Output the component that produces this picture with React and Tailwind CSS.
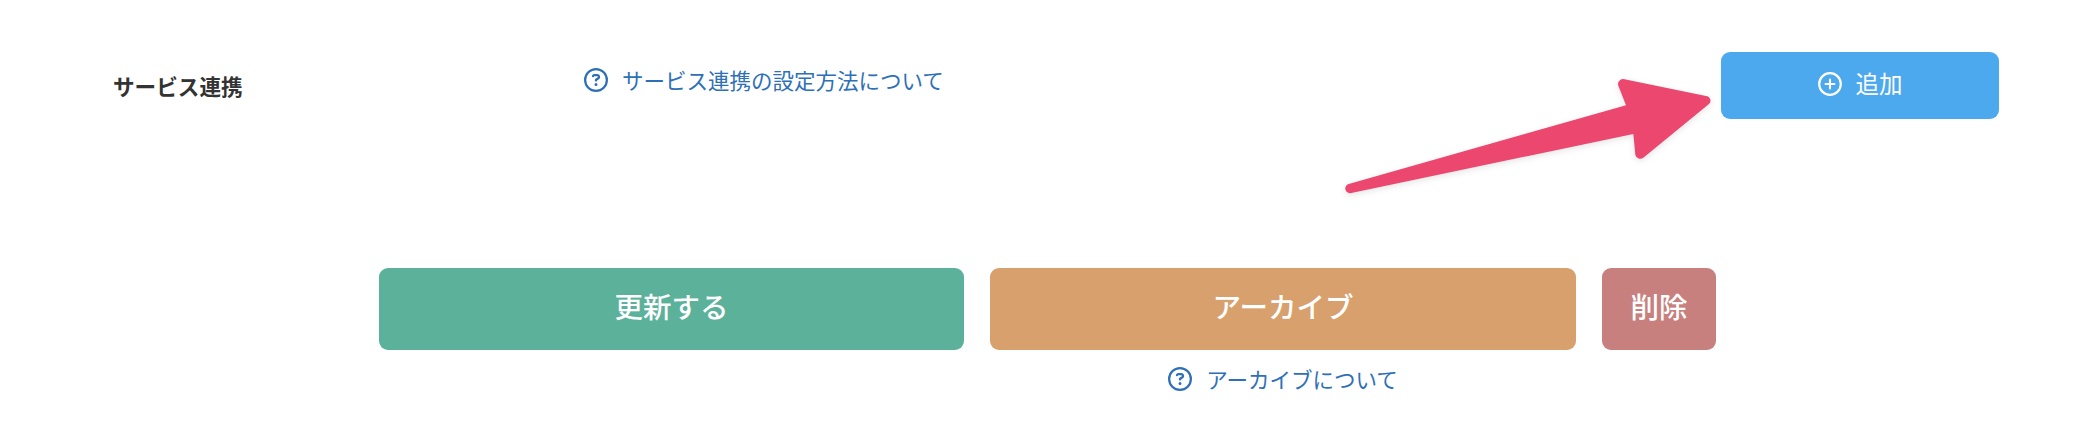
import { FaRegCircleQuestion } from "react-icons/fa6";

const font = "font-['Noto_Sans_CJK_JP',sans-serif]";

function HelpLink({ children, className }) {
    return (
        <a href="#" className={`flex items-center gap-[14px] text-[21.5px] leading-8 text-[#2e70b7] whitespace-nowrap ${className}`}>
          <FaRegCircleQuestion className="w-6 h-6 shrink-0" />
          <span>{children}</span>
        </a>
    );
}

function PlusIcon() {
    return (
        <svg viewBox="0 0 24 24" fill="none" stroke="currentColor" strokeLinecap="round" className="w-6 h-6 shrink-0">
          <circle cx="12" cy="12" r="10.8" strokeWidth="2.2" />
          <path d="M12 7.6v8.8M7.6 12h8.8" strokeWidth="2.1" />
        </svg>
    );
}

function Arrow() {
    return (
        <svg viewBox="0 0 1260 480" className="absolute left-[1320px] top-[50px] w-[420px] h-40 pointer-events-none drop-shadow-[0_2px_3px_rgba(0,0,0,0.1)]">
          <path
            fill="#ec486f"
            d="M86 402 L918 166 L895 107 A15 15 0 0 1 910 87 L1158 138 A14 14 0 0 1 1166 163 L970 323 A15 15 0 0 1 946 315 L940 252 L94 429 A14 14 0 0 1 86 402 Z"
          />
        </svg>
    );
}

export default function App(){
    return(
        <div className={`relative w-[2100px] h-[434px] bg-white overflow-hidden ${font}`}>
          <div className="flex items-start pl-[113px] pt-[52px] h-[268px]">
            <h2 className="w-[471px] pt-[18px] text-[21.6px] leading-8 font-bold text-[#333]">サービス連携</h2>
            <HelpLink className="pt-3">サービス連携の設定方法について</HelpLink>
            <button className="ml-auto mr-[101px] pb-[3px] w-[278px] h-[67px] rounded-[9px] bg-[#4ca9ee] text-white text-[23.5px] leading-none flex items-center justify-center gap-[14px]">
              <PlusIcon />
              <span>追加</span>
            </button>
          </div>

          <div className="flex items-start gap-[26px] pl-[379px]">
            <button className="w-[585px] h-[82px] pb-[5px] rounded-[9px] bg-[#5bb199] text-white text-[28.5px] font-medium">更新する</button>
            <div className="w-[586px] flex flex-col items-center">
              <button className="w-full h-[82px] pb-[5px] rounded-[9px] bg-[#d8a06d] text-white text-[28.5px] font-medium">アーカイブ</button>
              <HelpLink className="mt-[13px]">アーカイブについて</HelpLink>
            </div>
            <button className="w-[114px] h-[82px] pb-[5px] rounded-[9px] bg-[#c7807d] text-white text-[28.5px] font-medium">削除</button>
          </div>

          <Arrow />
        </div>
    );
}
